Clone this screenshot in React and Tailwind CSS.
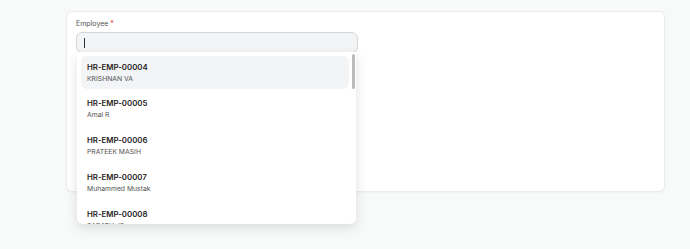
import React from 'react';

const employees = [
  { id: 'HR-EMP-00004', name: 'KRISHNAN VA' },
  { id: 'HR-EMP-00005', name: 'Amal R' },
  { id: 'HR-EMP-00006', name: 'PRATEEK MASIH' },
  { id: 'HR-EMP-00007', name: 'Muhammed Mustak' },
  { id: 'HR-EMP-00008', name: 'SARATH JS' },
];

export default function App() {
  return (
    <div
      className="h-[249px] w-[690px] overflow-hidden bg-[#f8f9f9] pl-[66px] pt-[11px]"
      style={{ fontFamily: 'Inter, "Noto Sans", sans-serif' }}
    >
      <div className="h-[181px] w-[599px] rounded-md border border-[#ececec] bg-white px-[9px] pt-[5px] shadow-[0_1px_2px_rgba(0,0,0,0.04)]">
        <label className="block text-[7px] leading-[14px] text-[#525252]">
          Employee <span className="text-[#e03636]">*</span>
        </label>
        <div className="relative mt-[1px] w-[282px]">
          <div className="flex h-[21px] items-center rounded-md border border-[#d4d6d8] bg-[#f3f4f5] px-[7px]">
            <div className="h-[10px] w-px bg-[#333]" />
          </div>
          <div className="absolute left-[1px] top-[20px] z-10 h-[172px] w-[279px] overflow-hidden rounded-b-md bg-white shadow-[0_4px_12px_rgba(0,0,0,0.12)]">
            <div className="flex flex-col gap-[3.75px] py-[4px] pl-[4px] pr-[7px]">
              {employees.map((e, i) => (
                <div
                  key={e.id}
                  className={`flex h-[33px] flex-col justify-center rounded-md px-[6px] ${
                    i === 0 ? 'bg-[#f3f4f5]' : ''
                  }`}
                >
                  <div className="text-[7.8px] font-semibold leading-[11px] text-[#1f2124]">{e.id}</div>
                  <div className="text-[6.8px] leading-[11px] text-[#525252]">{e.name}</div>
                </div>
              ))}
            </div>
            <div className="absolute right-[1px] top-[2px] h-[35px] w-[3px] rounded-sm bg-[#b9bcbf]" />
          </div>
        </div>
      </div>
    </div>
  );
}
